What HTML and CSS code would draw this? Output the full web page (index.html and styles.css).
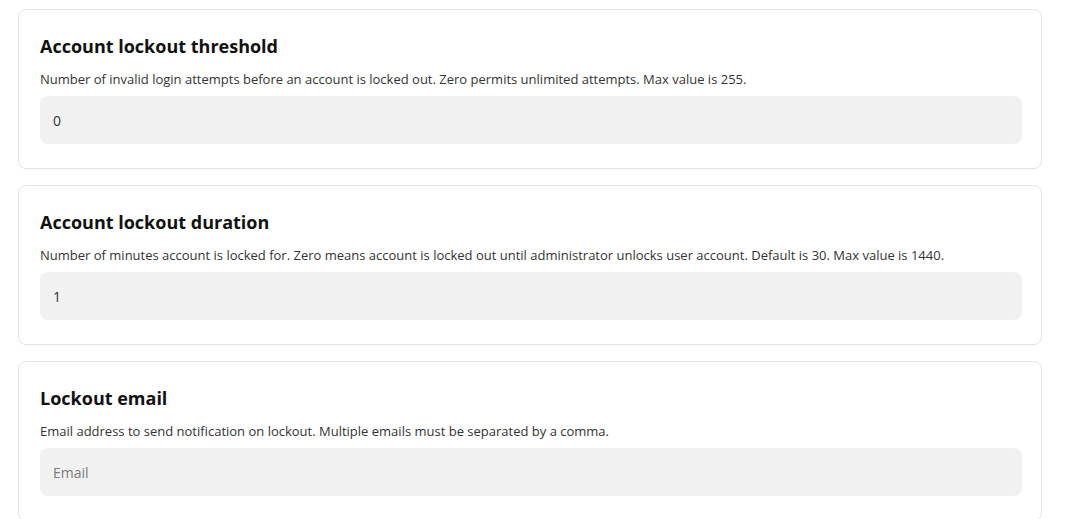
FILE: index.html
```html
<!DOCTYPE html>
<html lang="en">
<head>
<meta charset="utf-8">
<title>Lockout settings</title>
<link rel="stylesheet" href="styles.css">
</head>
<body>
<main class="settings">
  <section class="card">
    <h2 class="card-title">Account lockout threshold</h2>
    <p class="card-desc">Number of invalid login attempts before an account is locked out. Zero permits unlimited attempts. Max value is 255.</p>
    <input class="field" type="text" value="0">
  </section>
  <section class="card">
    <h2 class="card-title">Account lockout duration</h2>
    <p class="card-desc">Number of minutes account is locked for. Zero means account is locked out until administrator unlocks user account. Default is 30. Max value is 1440.</p>
    <input class="field" type="text" value="1">
  </section>
  <section class="card">
    <h2 class="card-title">Lockout email</h2>
    <p class="card-desc">Email address to send notification on lockout. Multiple emails must be separated by a comma.</p>
    <input class="field" type="text" placeholder="Email">
  </section>
</main>
</body>
</html>
```
FILE: styles.css
```css
* { box-sizing: border-box; }
html, body { margin: 0; padding: 0; background: #ffffff; }
body {
  font-family: "Open Sans", "Noto Sans", sans-serif;
  color: #222;
}
.settings {
  width: 1024px;
  margin: 9px 0 0 18px;
  display: flex;
  flex-direction: column;
  gap: 16px;
}
.card {
  border: 1px solid #e3e3e3;
  border-radius: 8px;
  background: #fff;
  padding: 24px 19px 24px 21px;
  display: flex;
  flex-direction: column;
}
.card-title {
  margin: 0;
  font-size: 18px;
  line-height: 25px;
  font-weight: 700;
  color: #111;
}
.card-desc {
  margin: 11px 0 8px 0;
  font-size: 13px;
  line-height: 18px;
  color: #333;
}
.field {
  height: 48px;
  border: none;
  border-radius: 8px;
  background: #f1f1f1;
  padding: 0 13px;
  font-family: "Open Sans", "Noto Sans", sans-serif;
  font-size: 14px;
  color: #333;
  outline: none;
}
.field::placeholder { color: #7a7a7a; }
```
